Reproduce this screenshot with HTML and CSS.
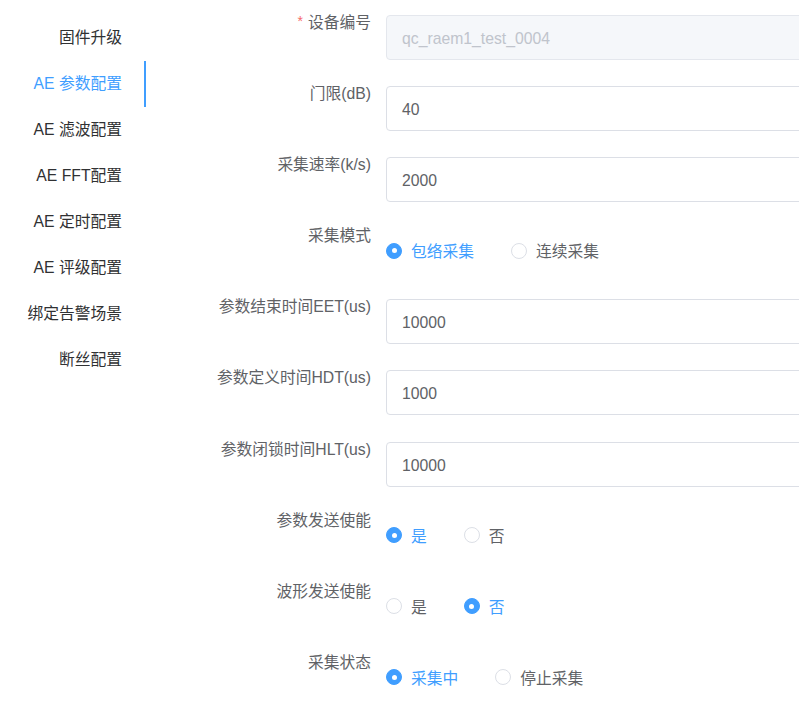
FILE: index.html
```html
<!DOCTYPE html>
<html lang="zh">
<head>
<meta charset="utf-8">
<title>AE 参数配置</title>
<link rel="stylesheet" href="styles.css">
</head>
<body>
<div class="page">
  <nav class="tabs">
    <div class="tab">固件升级</div>
    <div class="tab active">AE 参数配置</div>
    <div class="tab">AE 滤波配置</div>
    <div class="tab">AE FFT配置</div>
    <div class="tab">AE 定时配置</div>
    <div class="tab">AE 评级配置</div>
    <div class="tab">绑定告警场景</div>
    <div class="tab">断丝配置</div>
  </nav>
  <form class="form">
    <div class="item">
      <label class="label required">设备编号</label>
      <div class="content"><div class="input disabled">qc_raem1_test_0004</div></div>
    </div>
    <div class="item">
      <label class="label">门限(dB)</label>
      <div class="content"><div class="input">40</div></div>
    </div>
    <div class="item">
      <label class="label">采集速率(k/s)</label>
      <div class="content"><div class="input">2000</div></div>
    </div>
    <div class="item">
      <label class="label">采集模式</label>
      <div class="content radios">
        <span class="radio checked"><span class="dot"></span><span class="rtext">包络采集</span></span>
        <span class="radio"><span class="dot"></span><span class="rtext">连续采集</span></span>
      </div>
    </div>
    <div class="item">
      <label class="label">参数结束时间EET(us)</label>
      <div class="content"><div class="input">10000</div></div>
    </div>
    <div class="item">
      <label class="label">参数定义时间HDT(us)</label>
      <div class="content"><div class="input">1000</div></div>
    </div>
    <div class="item">
      <label class="label">参数闭锁时间HLT(us)</label>
      <div class="content"><div class="input">10000</div></div>
    </div>
    <div class="item">
      <label class="label">参数发送使能</label>
      <div class="content radios">
        <span class="radio checked"><span class="dot"></span><span class="rtext">是</span></span>
        <span class="radio"><span class="dot"></span><span class="rtext">否</span></span>
      </div>
    </div>
    <div class="item">
      <label class="label">波形发送使能</label>
      <div class="content radios">
        <span class="radio"><span class="dot"></span><span class="rtext">是</span></span>
        <span class="radio checked"><span class="dot"></span><span class="rtext">否</span></span>
      </div>
    </div>
    <div class="item">
      <label class="label">采集状态</label>
      <div class="content radios">
        <span class="radio checked"><span class="dot"></span><span class="rtext">采集中</span></span>
        <span class="radio"><span class="dot"></span><span class="rtext">停止采集</span></span>
      </div>
    </div>
  </form>
</div>
</body>
</html>
```

FILE: styles.css
```css
html, body {
  margin: 0;
  padding: 0;
  background: #ffffff;
  overflow: hidden;
}
body {
  font-family: "Liberation Sans", Arial, "Noto Sans CJK SC", sans-serif;
  font-size: 15.75px;
  color: #606266;
}
.page {
  display: flex;
  align-items: flex-start;
  padding-top: 15px;
  width: 799px;
  height: 703px;
  box-sizing: border-box;
  overflow: hidden;
}
.tabs {
  width: 146px;
  flex: none;
  display: flex;
  flex-direction: column;
}
.tab {
  height: 46px;
  line-height: 46px;
  text-align: right;
  padding-right: 22px;
  color: #303133;
  white-space: nowrap;
  border-right: 2px solid transparent;
}
.tab.active {
  color: #409eff;
  border-right-color: #409eff;
}
.form {
  margin: 0;
  flex: none;
  display: flex;
  flex-direction: column;
}
.item {
  display: flex;
  height: 45px;
  margin-bottom: 26.1px;
}
.label {
  width: 240px;
  flex: none;
  box-sizing: border-box;
  padding-right: 15px;
  text-align: right;
  line-height: 15px;
  white-space: nowrap;
  color: #606266;
}
.label.required::before {
  content: "*";
  color: #f56c6c;
  margin-right: 5px;
  font-size: 14px;
  position: relative;
  top: -2px;
}
.content {
  width: 440px;
  display: flex;
  align-items: center;
}
.input {
  width: 100%;
  height: 45px;
  box-sizing: border-box;
  border: 1px solid #dcdfe6;
  border-radius: 4px;
  padding: 0 15px;
  line-height: 45px;
  color: #606266;
  background: #ffffff;
}
.input.disabled {
  background: #f5f7fa;
  border-color: #e4e7ed;
  color: #c0c4cc;
}
.radio {
  display: inline-flex;
  align-items: center;
  margin-right: 37px;
  color: #606266;
}
.dot {
  width: 16px;
  height: 16px;
  box-sizing: border-box;
  border: 1px solid #dcdfe6;
  border-radius: 50%;
  background: #fff;
  display: inline-flex;
  align-items: center;
  justify-content: center;
}
.rtext {
  padding-left: 9px;
}
.radio.checked {
  color: #409eff;
}
.radio.checked .dot {
  background: #409eff;
  border-color: #409eff;
}
.radio.checked .dot::after {
  content: "";
  width: 5px;
  height: 5px;
  border-radius: 50%;
  background: #fff;
}
```
